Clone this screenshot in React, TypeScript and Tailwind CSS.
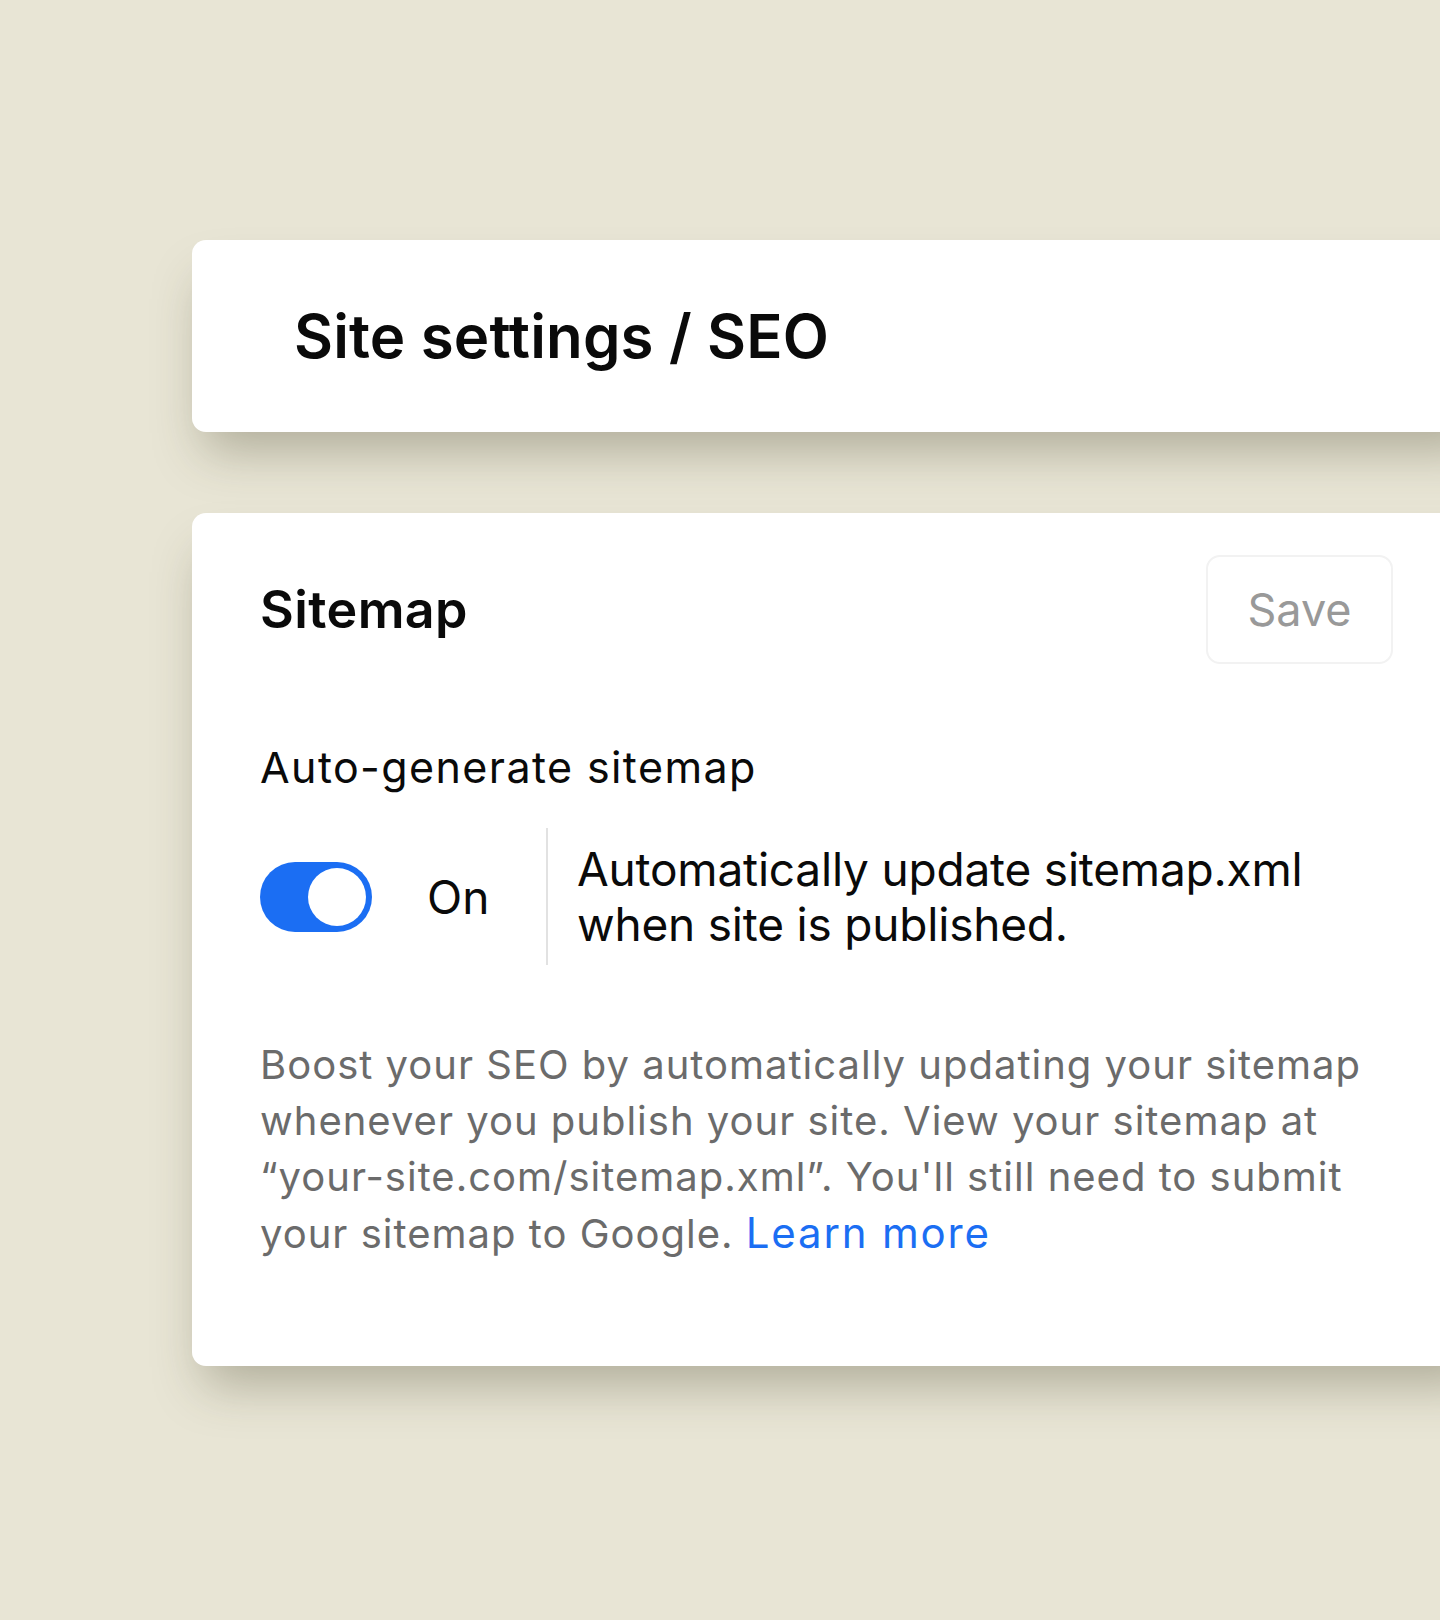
import { useState } from 'react';

const Toggle = ({ on, onChange }: { on: boolean; onChange: (v: boolean) => void }) => (
  <button
    type="button"
    onClick={() => onChange(!on)}
    className={`flex h-[70px] w-[112px] shrink-0 items-center rounded-full p-[6px] ${
      on ? 'justify-end bg-[#1b6ef3]' : 'justify-start bg-[#d4d4d4]'
    }`}
  >
    <span className="block h-[58px] w-[58px] rounded-full bg-white" />
  </button>
);

export default function App() {
  const [autoSitemap, setAutoSitemap] = useState(true);

  return (
    <div className="min-h-[1620px] w-[1440px] overflow-hidden bg-[#e8e5d5] pl-[192px] pt-[240px] font-['Inter',sans-serif]">
      {/* page header card */}
      <div className="flex h-[192px] w-[1300px] items-center rounded-[14px] bg-white pl-[102px] shadow-[0_30px_50px_-12px_rgba(70,65,40,0.35)]">
        <h1 className="text-[60px] font-semibold leading-none tracking-[0.15px] text-[#0a0a0a]">
          Site settings / SEO
        </h1>
      </div>

      {/* sitemap card */}
      <div className="mt-[81px] w-[1300px] rounded-[14px] bg-white pb-[104px] pl-[68px] pr-[99px] pt-[42px] shadow-[0_30px_50px_-12px_rgba(70,65,40,0.35)]">
        <div className="flex items-center justify-between">
          <h2 className="text-[52px] font-semibold leading-none tracking-[0.4px] text-[#0a0a0a]">Sitemap</h2>
          <button
            type="button"
            className="flex h-[109px] w-[187px] items-center justify-center rounded-[14px] border-2 border-[#f2f2f2] text-[45px] text-[#999999]"
          >
            Save
          </button>
        </div>

        <p className="mt-[77px] text-[43px] leading-[52px] tracking-[1.4px] text-[#0a0a0a]">
          Auto-generate sitemap
        </p>

        <div className="mt-[35px] flex items-center">
          <Toggle on={autoSitemap} onChange={setAutoSitemap} />
          <span className="ml-[55px] w-[60px] text-[46px] leading-none text-[#0a0a0a]">
            {autoSitemap ? 'On' : 'Off'}
          </span>
          <div className="ml-[59px] h-[137px] w-[2px] bg-[#e2e2e2]" />
          <p className="ml-[29px] text-[46px] leading-[55px] tracking-[-0.2px] text-[#0a0a0a]">
            Automatically update sitemap.xml
            <br />
            when site is published.
          </p>
        </div>

        <p className="mt-[72px] text-[40px] leading-[56px] tracking-[1px] text-[#6b6b6b]">
          Boost your SEO by automatically updating your sitemap whenever you publish your site. View
          your sitemap at “your-site.com/sitemap.xml”. You'll still need to submit your sitemap to
          Google.{' '}
          <a href="#" className="text-[42px] tracking-[1.8px] text-[#1b6ef3]">
            Learn more
          </a>
        </p>
      </div>
    </div>
  );
}
